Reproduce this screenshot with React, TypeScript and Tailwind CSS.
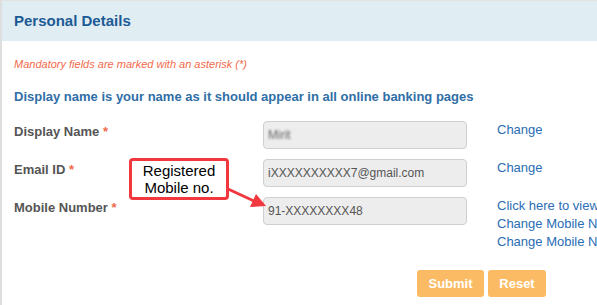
import React from 'react';

const font = { fontFamily: '"Liberation Sans", Arial, sans-serif' };

function Field({ label, children, links }: { label: string; children: React.ReactNode; links: string[] }) {
  return (
    <div className="flex items-start">
      <div className="w-[249px] shrink-0 text-[13px] leading-[18px] pt-[2px] font-bold text-[#555555]">
        {label} <span className="text-[#f26a4b]">*</span>
      </div>
      <div className="w-[204px] shrink-0 h-[28px] rounded-[4px] border border-[#cfcfcf] bg-[#ededed] flex items-center px-[4px] text-[12px] text-[#555555]">
        {children}
      </div>
      <div className="ml-[30px] min-w-0 flex flex-col whitespace-nowrap text-[13px] leading-[18px] text-[#2a6db5]">
        {links.map((l) => (
          <span key={l}>{l}</span>
        ))}
      </div>
    </div>
  );
}

export default function App() {
  return (
    <div style={font} className="relative w-[597px] h-[305px] overflow-hidden bg-white border-l-[2px] border-[#dedede]">
      <div className="h-[41px] bg-[#e0edf2] border-t border-[#e3e3e3] px-[12px] flex items-center">
        <h2 className="text-[15px] font-bold text-[#1c5b96]">Personal Details</h2>
      </div>

      <div className="px-[12px] pt-[16px]">
        <p className="h-[14px] text-[11px] leading-[14px] italic text-[#f26a4b]">
          Mandatory fields are marked with an asterisk (*)
        </p>
        <h3 className="mt-[17px] h-[18px] text-[13px] leading-[18px] font-bold text-[#2f6ea6]">
          Display name is your name as it should appear in all online banking pages
        </h3>

        <div className="mt-[15px] flex flex-col gap-[10px]">
          <Field label="Display Name" links={['Change']}>
            <span className="blur-[1px] text-[#666]">Mirit</span>
          </Field>
          <Field label="Email ID" links={['Change']}>
            iXXXXXXXXXX7@gmail.com
          </Field>
          <Field
            label="Mobile Number"
            links={['Click here to view Mobile Number', 'Change Mobile Number', 'Change Mobile Number Request']}
          >
            91-XXXXXXXX48
          </Field>
        </div>

        <div className="mt-[19px] flex justify-end gap-[4px] pr-[39px]">
          <button className="w-[67px] h-[27px] rounded-[3px] bg-[#fbbb64] text-white text-[13px] font-bold">Submit</button>
          <button className="w-[58px] h-[27px] rounded-[3px] bg-[#fbbb64] text-white text-[13px] font-bold">Reset</button>
        </div>
      </div>

      {/* annotation callout */}
      <div className="absolute left-[127px] top-[158px] w-[100px] h-[42px] rounded-[4px] border-[3px] border-[#f2383f] bg-white flex flex-col items-center justify-center text-[15px] leading-[17px] text-black">
        <span>Registered</span>
        <span>Mobile no.</span>
      </div>
      <svg className="absolute left-0 top-0" width="597" height="305">
        <line x1="226" y1="189" x2="252" y2="201" stroke="#f2383f" strokeWidth="3" />
        <polygon points="264,206 248,207 254,194" fill="#f2383f" />
      </svg>
    </div>
  );
}
